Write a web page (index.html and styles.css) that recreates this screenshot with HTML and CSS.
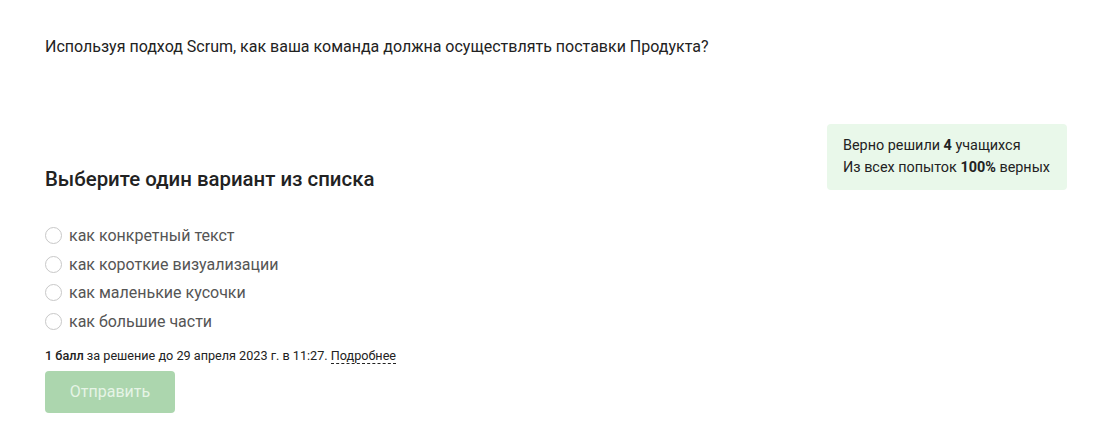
FILE: index.html
```html
<!DOCTYPE html>
<html lang="ru">
<head>
<meta charset="utf-8">
<link rel="stylesheet" href="styles.css">
</head>
<body>
<div class="page">
  <p class="question">Используя подход Scrum, как ваша команда должна осуществлять поставки Продукта?</p>
  <div class="quiz">
    <div class="quiz-head">
      <h2 class="title">Выберите один вариант из списка</h2>
      <div class="stats">
        <div class="stat">Верно решили <b>4</b> учащихся</div>
        <div class="stat">Из всех попыток <b>100%</b> верных</div>
      </div>
    </div>
    <ul class="options">
      <li class="option"><span class="radio"></span><span class="label">как конкретный текст</span></li>
      <li class="option"><span class="radio"></span><span class="label">как короткие визуализации</span></li>
      <li class="option"><span class="radio"></span><span class="label">как маленькие кусочки</span></li>
      <li class="option"><span class="radio"></span><span class="label">как большие части</span></li>
    </ul>
    <div class="score"><b>1 балл</b> за решение до 29 апреля 2023 г. в 11:27. <span class="more">Подробнее</span></div>
    <button class="submit" disabled>Отправить</button>
  </div>
</div>
</body>
</html>
```

FILE: styles.css
```css
* { box-sizing: border-box; }
html, body { margin: 0; padding: 0; background: #fff; }
body { font-family: Roboto, "Noto Sans", sans-serif; color: #222; }
.page { padding: 37px 52px 0 45px; width: 1119px; }
.question { margin: 0; font-size: 16px; line-height: 20px; color: #222; }
.quiz { margin-top: 67px; }
.quiz-head { display: flex; justify-content: space-between; align-items: flex-start; }
.title { margin: 41px 0 0 0; font-size: 20.4px; font-weight: 500; line-height: 28px; color: #222; }
.stats { width: 240px; background: #e9f8ea; border-radius: 4px; padding: 11px 16px 11px 16px; font-size: 14.4px; line-height: 22px; color: #222; }
.stats b { font-weight: 700; }
.options { list-style: none; margin: 28px 0 0 0; padding: 0; }
.option { display: flex; align-items: center; height: 28.7px; font-size: 16px; color: #555; }
.radio { width: 17px; height: 17px; border: 1px solid #c8c8c8; border-radius: 50%; margin-left: 0; margin-right: 7px; }
.score { margin-top: 12px; font-size: 12.65px; line-height: 16px; color: #222; }
.score b { font-weight: 500; }
.more { border-bottom: 1px dashed #222; }
.submit { margin-top: 7px; width: 130px; height: 42px; border: none; border-radius: 4px; background: #acd6ae; color: #e6f4e6; font-family: Roboto, sans-serif; font-size: 16px; padding: 0; }
```
